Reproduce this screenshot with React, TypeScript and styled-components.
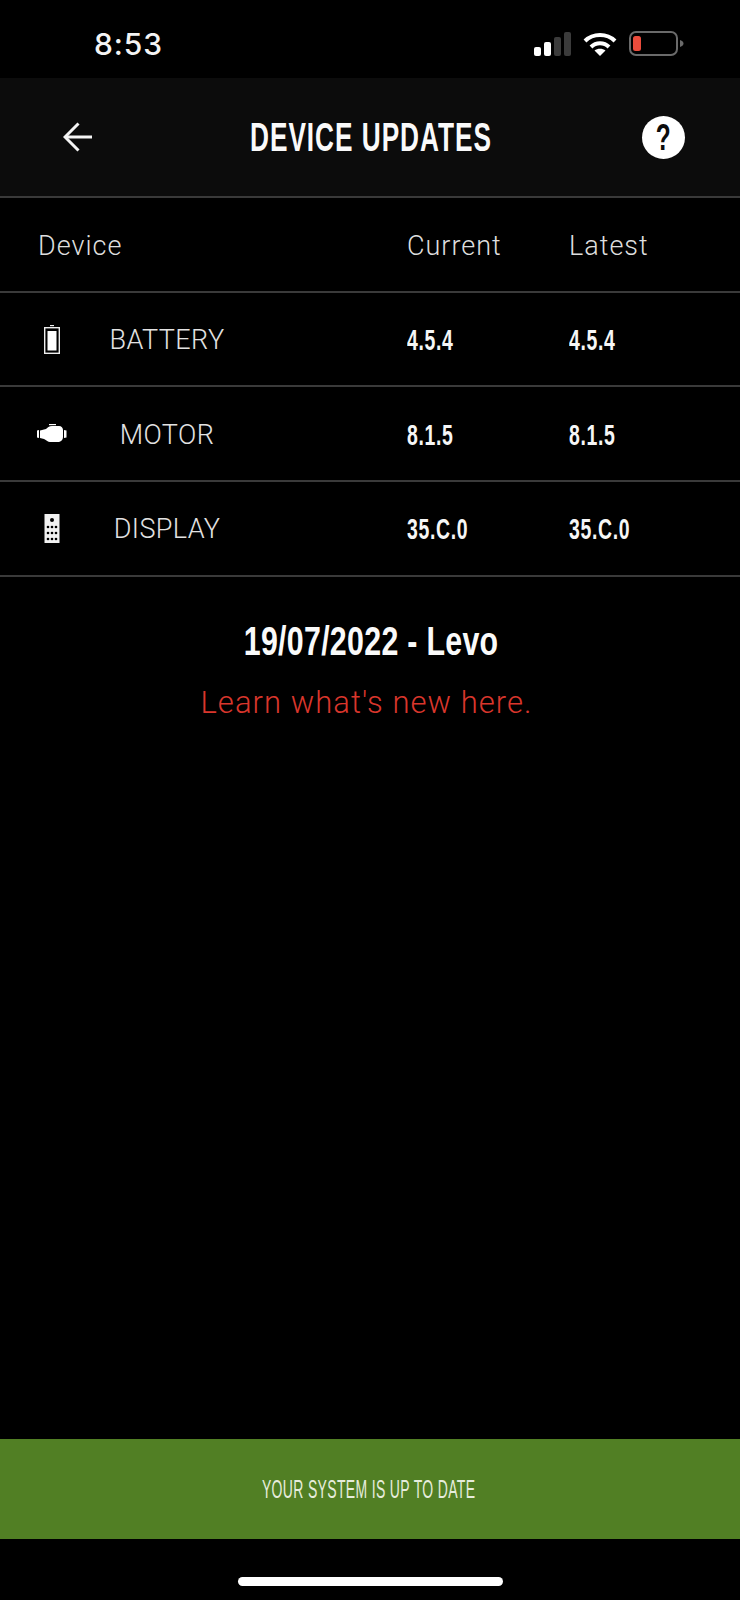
import styled, { createGlobalStyle } from "styled-components";

const heading = `"Liberation Sans", Arial, sans-serif`;
const light = `Roboto, "Liberation Sans", sans-serif`;

const GlobalStyle = createGlobalStyle`
  html, body {
    margin: 0;
    padding: 0;
    background: #000;
  }
`;

const Screen = styled.div`
  width: 740px;
  height: 1600px;
  background: #000;
  color: #fff;
  display: flex;
  flex-direction: column;
  overflow: hidden;
`;

const StatusBar = styled.div`
  height: 78px;
  box-sizing: border-box;
  padding: 27px 56px 0 94px;
  display: flex;
  justify-content: space-between;
  align-items: flex-start;
`;

const Time = styled.span`
  font-family: Inter, sans-serif;
  font-weight: 500;
  font-size: 30px;
  line-height: 35px;
  letter-spacing: 0.9px;
  color: #f4f4f4;
`;

const StatusIcons = styled.div`
  display: flex;
  align-items: center;
  gap: 12px;
  margin-top: 4px;
`;

const Header = styled.header`
  height: 120px;
  box-sizing: border-box;
  padding: 0 55px 0 63px;
  background: #0c0c0c;
  border-bottom: 2px solid #3a3a3a;
  display: flex;
  align-items: center;
  justify-content: space-between;
`;

// the app's typeface is a condensed DIN, so the heading font gets squeezed
const Title = styled.h1`
  margin: 0 0 0 7px;
  font-family: ${heading};
  font-weight: 700;
  font-size: 41px;
  letter-spacing: 1.5px;
  white-space: nowrap;
  color: #fafafa;
  transform: scaleX(0.64);
`;

const HelpButton = styled.div`
  width: 43px;
  height: 43px;
  border-radius: 50%;
  background: #fff;
  display: flex;
  align-items: center;
  justify-content: center;
`;

const HelpMark = styled.span`
  font-family: ${heading};
  font-weight: 700;
  font-size: 37px;
  line-height: 43px;
  color: #0c0c0c;
  transform: scaleX(0.66);
`;

const Row = styled.div`
  height: 94.7px;
  box-sizing: border-box;
  border-bottom: 2px solid #3a3a3a;
  display: grid;
  grid-template-columns: 37px 30px 340px 162px 1fr;
  align-items: center;
`;

const HeadLabel = styled.span<{ $col: number }>`
  grid-column: ${(p) => p.$col} / span ${(p) => (p.$col === 1 ? 3 : 1)};
  padding-left: ${(p) => (p.$col === 1 ? 38 : 0)}px;
  margin-top: 4px;
  font-family: ${light};
  font-weight: 300;
  font-size: 27px;
  letter-spacing: 1px;
  color: #dedede;
`;

const IconCell = styled.div`
  grid-column: 2;
  display: flex;
  justify-content: center;
`;

const DeviceName = styled.span`
  width: 200px;
  margin-top: 2px;
  font-family: ${light};
  font-weight: 300;
  font-size: 27px;
  letter-spacing: 0.4px;
  color: #e2e2e2;
  text-align: center;
`;

const Version = styled.span`
  margin-top: 3px;
  font-family: ${heading};
  font-weight: 700;
  font-size: 29px;
  letter-spacing: 1px;
  color: #f6f6f6;
  transform: scaleX(0.67);
  transform-origin: left center;
`;

const Release = styled.section`
  padding-top: 39px;
  display: flex;
  flex-direction: column;
  align-items: center;
  margin-left: -1px;
`;

const ReleaseTitle = styled.h2`
  margin: 0 0 0 3px;
  font-family: ${heading};
  font-weight: 700;
  font-size: 41px;
  line-height: 50px;
  letter-spacing: 0.4px;
  white-space: nowrap;
  color: #fafafa;
  transform: scaleX(0.74);
`;

const ReleaseLink = styled.a`
  margin: 18px 6px 0 0;
  font-family: ${light};
  font-weight: 300;
  font-size: 31px;
  line-height: 38px;
  letter-spacing: 1.05px;
  color: #d9362c;
`;

const Spacer = styled.div`
  flex: 1;
`;

const UpToDate = styled.div`
  height: 100px;
  background: #517f24;
  display: flex;
  align-items: center;
  justify-content: center;
`;

const UpToDateLabel = styled.span`
  margin-right: 3px;
  font-family: ${heading};
  font-size: 25px;
  letter-spacing: 0.6px;
  white-space: nowrap;
  color: #e6ecdc;
  transform: scaleX(0.56);
`;

const HomeArea = styled.div`
  height: 61px;
  box-sizing: border-box;
  padding-top: 38px;
  display: flex;
  justify-content: center;
`;

const HomeIndicator = styled.div`
  width: 265px;
  height: 9px;
  border-radius: 5px;
  background: #fff;
`;

const SignalIcon = () => (
  <svg width="37" height="24" viewBox="0 0 37 24">
    <rect x="0" y="15" width="7" height="9" rx="2" fill="#fff" />
    <rect x="10" y="10" width="7" height="14" rx="2" fill="#fff" />
    <rect x="20" y="5" width="7" height="19" rx="2" fill="#3b3b3b" />
    <rect x="30" y="0" width="7" height="24" rx="2" fill="#3b3b3b" />
  </svg>
);

const WifiIcon = () => (
  <svg width="34" height="24" viewBox="0 0 34 24" fill="none" stroke="#fff" strokeWidth="4">
    <path d="M2 9 C10 1 24 1 32 9" />
    <path d="M8 15 C13 10 21 10 26 15" />
    <path d="M17 24 L11.5 18.5 C14.5 16 19.5 16 22.5 18.5 Z" fill="#fff" stroke="none" />
  </svg>
);

const BatteryStatusIcon = () => (
  <svg width="55" height="25" viewBox="0 0 55 25">
    <rect x="1" y="1" width="47" height="23" rx="6" fill="none" stroke="#6a6a6a" strokeWidth="2" />
    <rect x="4" y="5" width="8" height="15" rx="2.5" fill="#ea4c3c" />
    <path d="M51 9 C53.5 10 54.5 11 54.5 12.5 C54.5 14 53.5 15 51 16 Z" fill="#6a6a6a" />
  </svg>
);

const BackArrow = () => (
  <svg width="29" height="30" viewBox="0 0 29 30" fill="none" stroke="#f5f5f5" strokeWidth="3">
    <path d="M29 15 H2" />
    <path d="M15.5 1.5 L2 15 L15.5 28.5" />
  </svg>
);

const BatteryIcon = () => (
  <svg width="16" height="29" viewBox="0 0 16 29">
    <rect x="6" y="0" width="4" height="1.2" fill="#eee" />
    <rect x="0.7" y="2.7" width="14.6" height="25.6" fill="none" stroke="#eee" strokeWidth="1.4" />
    <rect x="3.5" y="6" width="9" height="19.5" fill="#fff" />
  </svg>
);

const MotorIcon = () => (
  <svg width="30" height="19" viewBox="0 0 30 19">
    <rect x="12" y="0" width="7" height="1.2" fill="#fff" />
    <path
      d="M0 6.5 L2 6 V14 L0 13.5 Z M3 6.5 L9 5 C10.5 3.5 12 2 15 2 H22 C24.5 2 26 4 26 6 V13 C26 15.5 24.5 17.5 22 18 H13 C11 18 9.5 16 7 15 L3 14 Z M27 6 L29.5 6.5 V13.5 L27 14 Z"
      fill="#fff"
    />
  </svg>
);

const DisplayIcon = () => (
  <svg width="16" height="29" viewBox="0 0 16 29">
    <rect x="0.5" y="0" width="15" height="29" fill="#f2f2f2" />
    <g fill="#000">
      <circle cx="8" cy="6" r="2" />
      <circle cx="4" cy="13" r="1.3" />
      <circle cx="8" cy="13" r="1.3" />
      <circle cx="12" cy="13" r="1.3" />
      <circle cx="4" cy="19" r="1.3" />
      <circle cx="8" cy="19" r="1.3" />
      <circle cx="12" cy="19" r="1.3" />
      <circle cx="4" cy="25" r="1.3" />
      <circle cx="8" cy="25" r="1.3" />
      <circle cx="12" cy="25" r="1.3" />
    </g>
  </svg>
);

const devices = [
  { name: "BATTERY", icon: <BatteryIcon />, current: "4.5.4", latest: "4.5.4" },
  { name: "MOTOR", icon: <MotorIcon />, current: "8.1.5", latest: "8.1.5" },
  { name: "DISPLAY", icon: <DisplayIcon />, current: "35.C.0", latest: "35.C.0" },
];

export default function App() {
  return (
    <Screen>
      <GlobalStyle />
      <StatusBar>
        <Time>8:53</Time>
        <StatusIcons>
          <SignalIcon />
          <WifiIcon />
          <BatteryStatusIcon />
        </StatusIcons>
      </StatusBar>
      <Header>
        <BackArrow />
        <Title>DEVICE UPDATES</Title>
        <HelpButton>
          <HelpMark>?</HelpMark>
        </HelpButton>
      </Header>
      <Row>
        <HeadLabel $col={1}>Device</HeadLabel>
        <HeadLabel $col={4}>Current</HeadLabel>
        <HeadLabel $col={5}>Latest</HeadLabel>
      </Row>
      {devices.map((device) => (
        <Row key={device.name}>
          <IconCell>{device.icon}</IconCell>
          <DeviceName>{device.name}</DeviceName>
          <Version>{device.current}</Version>
          <Version>{device.latest}</Version>
        </Row>
      ))}
      <Release>
        <ReleaseTitle>19/07/2022 - Levo</ReleaseTitle>
        <ReleaseLink>Learn what's new here.</ReleaseLink>
      </Release>
      <Spacer />
      <UpToDate>
        <UpToDateLabel>YOUR SYSTEM IS UP TO DATE</UpToDateLabel>
      </UpToDate>
      <HomeArea>
        <HomeIndicator />
      </HomeArea>
    </Screen>
  );
}
